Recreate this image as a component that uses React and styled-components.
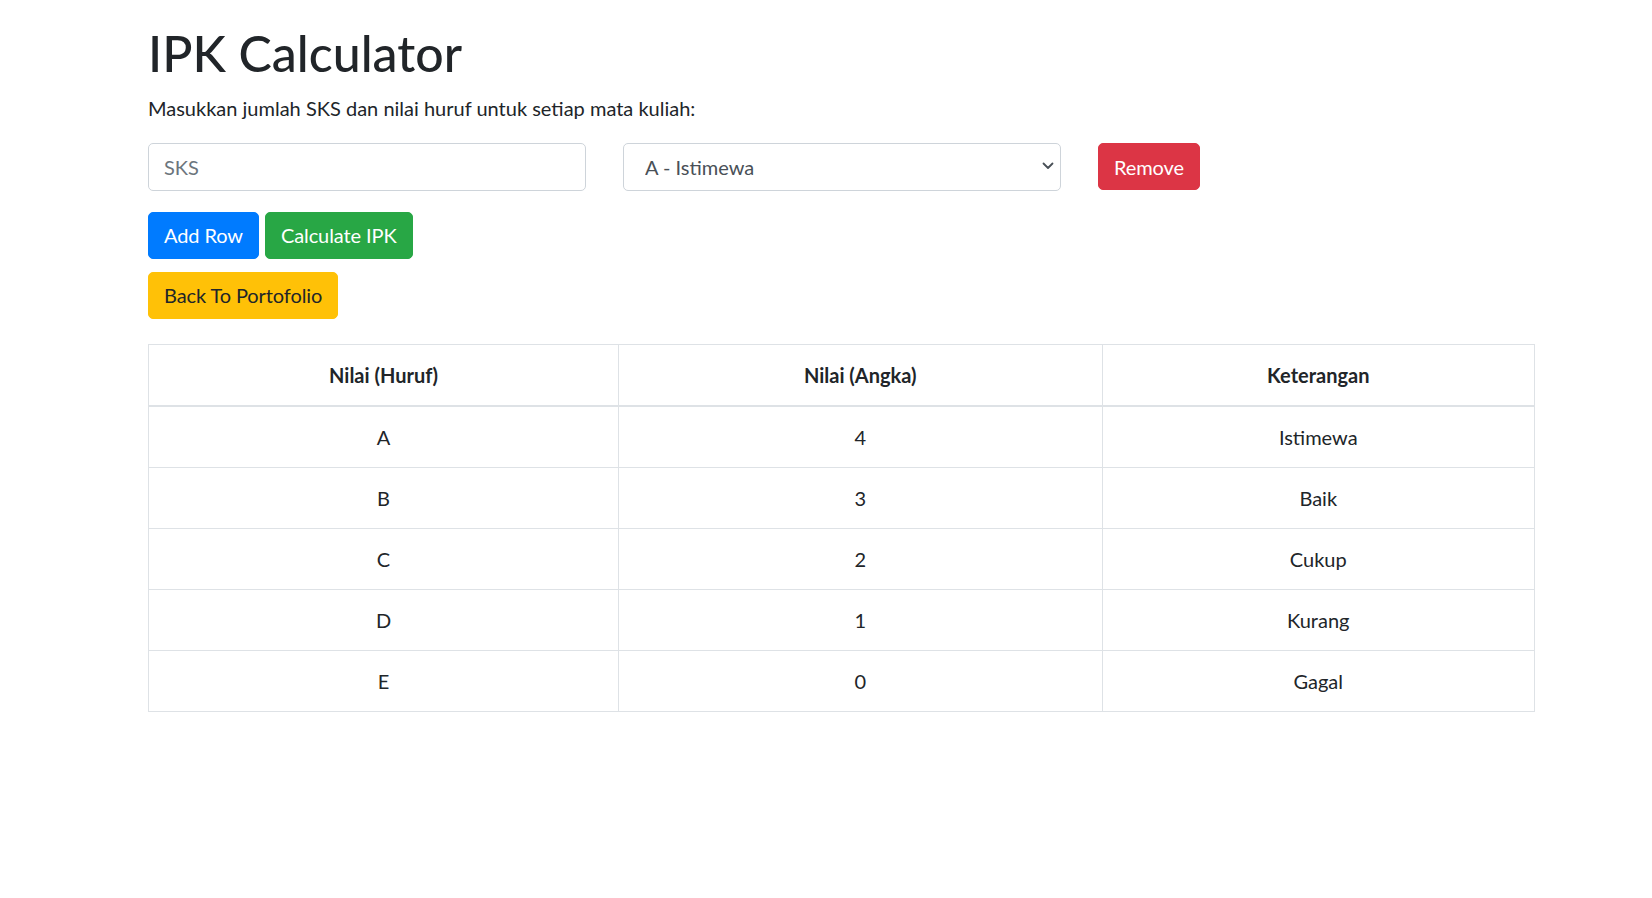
import React, { useState } from 'react';
import styled, { createGlobalStyle } from 'styled-components';

const GlobalStyle = createGlobalStyle`
  * { box-sizing: border-box; }
  body {
    margin: 0;
    background: #fff;
    color: #212529;
    font-family: Lato, "Open Sans", sans-serif;
    font-size: 20px;
    line-height: 1.5;
  }
`;

const Container = styled.div`
    width: 1387px;
    margin-left: 148px;
    padding-top: 23px;
`;

const Title = styled.h1`
    margin: 0 0 10px;
    font-size: 50px;
    font-weight: 500;
    line-height: 1.2;
`;

const Lead = styled.p`
    margin: 0 0 20px;
`;

const FormRow = styled.div`
    display: grid;
    grid-template-columns: repeat(3, 437.5px);
    column-gap: 37.5px;
    align-items: start;
    margin-bottom: 21px;
`;

const fieldStyles = `
    display: block;
    width: 100%;
    height: 47.5px;
    padding: 7.5px 15px;
    font-family: inherit;
    font-size: 20px;
    line-height: 1.5;
    color: #495057;
    background: #fff;
    border: 1px solid #ced4da;
    border-radius: 5px;
    outline: none;
`;

const Input = styled.input`
    ${fieldStyles}

    &::placeholder {
        color: #6c757d;
        opacity: 1;
    }
`;

const SelectWrap = styled.div`
    position: relative;
`;

const Select = styled.select`
    ${fieldStyles}
    padding-left: 21px;
    appearance: none;
`;

const Chevron = styled.svg`
    position: absolute;
    right: 7px;
    top: 19px;
    width: 12px;
    height: 8px;
    pointer-events: none;
`;

const colors = {
    primary: ['#007bff', '#fff'],
    success: ['#28a745', '#fff'],
    warning: ['#ffc107', '#212529'],
    danger: ['#dc3545', '#fff']
};

const Button = styled.button`
    display: inline-block;
    height: 47px;
    padding: 7.5px 15px;
    font-family: inherit;
    font-size: 20px;
    line-height: 1.5;
    letter-spacing: -0.1px;
    color: ${p => colors[p.variant][1]};
    background: ${p => colors[p.variant][0]};
    border: 1px solid ${p => colors[p.variant][0]};
    border-radius: 5px;
    cursor: pointer;
`;

const RemoveCell = styled.div`
    display: flex;
`;

const ButtonGroup = styled.div`
    display: flex;
    gap: 6px;
    margin-bottom: 13px;
`;

const Table = styled.table`
    width: 100%;
    margin-top: 25px;
    border-collapse: collapse;
    border: 1px solid #dee2e6;
    table-layout: fixed;
`;

const Th = styled.th`
    width: ${p => p.w}px;
    padding: 15px;
    font-weight: 700;
    text-align: center;
    border: 1px solid #dee2e6;
    border-bottom-width: 2px;
`;

const Td = styled.td`
    padding: 15px;
    text-align: center;
    border: 1px solid #dee2e6;
`;

const grades = [
    ['A', 4, 'Istimewa'],
    ['B', 3, 'Baik'],
    ['C', 2, 'Cukup'],
    ['D', 1, 'Kurang'],
    ['E', 0, 'Gagal']
];

export default function App() {
    const [sks, setSks] = useState('');
    const [grade, setGrade] = useState('4');

    return (
        <>
            <GlobalStyle />
            <Container>
                <Title>IPK Calculator</Title>
                <Lead>Masukkan jumlah SKS dan nilai huruf untuk setiap mata kuliah:</Lead>

                <FormRow>
                    <Input
                        type="number"
                        placeholder="SKS"
                        value={sks}
                        onChange={e => setSks(e.target.value)}
                    />
                    <SelectWrap>
                        <Select value={grade} onChange={e => setGrade(e.target.value)}>
                            {grades.map(([huruf, angka, ket]) => (
                                <option key={huruf} value={angka}>{huruf} - {ket}</option>
                            ))}
                        </Select>
                        <Chevron viewBox="0 0 12 8">
                            <path d="M1.5 1.5 L6 6 L10.5 1.5" fill="none" stroke="#495057" strokeWidth="1.8" strokeLinecap="round" strokeLinejoin="round" />
                        </Chevron>
                    </SelectWrap>
                    <RemoveCell>
                        <Button variant="danger">Remove</Button>
                    </RemoveCell>
                </FormRow>

                <ButtonGroup>
                    <Button variant="primary">Add Row</Button>
                    <Button variant="success">Calculate IPK</Button>
                </ButtonGroup>
                <div>
                    <Button variant="warning">Back To Portofolio</Button>
                </div>

                <Table>
                    <thead>
                        <tr>
                            <Th w={470}>Nilai (Huruf)</Th>
                            <Th w={483.5}>Nilai (Angka)</Th>
                            <Th>Keterangan</Th>
                        </tr>
                    </thead>
                    <tbody>
                        {grades.map(([huruf, angka, ket]) => (
                            <tr key={huruf}>
                                <Td>{huruf}</Td>
                                <Td>{angka}</Td>
                                <Td>{ket}</Td>
                            </tr>
                        ))}
                    </tbody>
                </Table>
            </Container>
        </>
    );
}
